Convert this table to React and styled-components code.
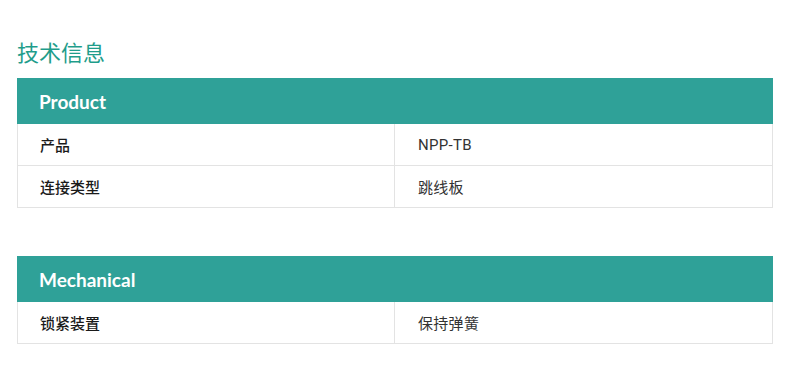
import React from 'react';
import styled, { createGlobalStyle } from 'styled-components';

const GlobalStyle = createGlobalStyle`
	body {
		margin: 0;
		background: #fff;
		font-family: 'Open Sans', 'Noto Sans CJK SC', sans-serif;
	}
`;

const Page = styled.div`
	padding: 36px 17px 0 17px;
	width: 756px;
`;

const Title = styled.h2`
	margin: 0 0 12px 0;
	font-size: 22px;
	font-weight: 400;
	line-height: 30px;
	color: #1f9d8b;
	font-family: 'Noto Sans CJK SC', sans-serif;
`;

const Table = styled.div`
	border: 1px solid #e3e3e3;
	border-top: none;
	margin-bottom: ${(p) => (p.$last ? '0' : '48px')};
`;

const Head = styled.div`
	height: 46px;
	background: #2fa198;
	display: flex;
	align-items: center;
	padding-left: 22px;
	margin: 0 -1px;
	color: #fff;
	font-family: 'Lato', sans-serif;
	font-size: 19px;
	font-weight: 700;
`;

const Row = styled.div`
	display: grid;
	grid-template-columns: 377px 1fr;
	height: 41px;
	border-top: ${(p) => (p.$first ? 'none' : '1px solid #e3e3e3')};
`;

const Label = styled.div`
	display: flex;
	align-items: center;
	padding-left: 22px;
	border-right: 1px solid #e3e3e3;
	font-family: 'Noto Sans CJK SC', sans-serif;
	font-size: 15px;
	font-weight: 500;
	color: #1a1a1a;
`;

const Value = styled.div`
	display: flex;
	align-items: center;
	padding-left: 23px;
	font-family: 'Roboto', 'Noto Sans CJK SC', sans-serif;
	font-size: 15px;
	letter-spacing: 0.3px;
	color: #333;
`;

const groups = [
	{
		name: 'Product',
		rows: [
			['产品', 'NPP-TB'],
			['连接类型', '跳线板'],
		],
	},
	{
		name: 'Mechanical',
		rows: [['锁紧装置', '保持弹簧']],
	},
];

const App = () => (
	<Page>
		<GlobalStyle />
		<Title>技术信息</Title>
		{groups.map((g, gi) => (
			<Table key={g.name} $last={gi === groups.length - 1}>
				<Head>{g.name}</Head>
				{g.rows.map(([k, v], i) => (
					<Row key={k} $first={i === 0}>
						<Label>{k}</Label>
						<Value>{v}</Value>
					</Row>
				))}
			</Table>
		))}
	</Page>
);

export default App;
